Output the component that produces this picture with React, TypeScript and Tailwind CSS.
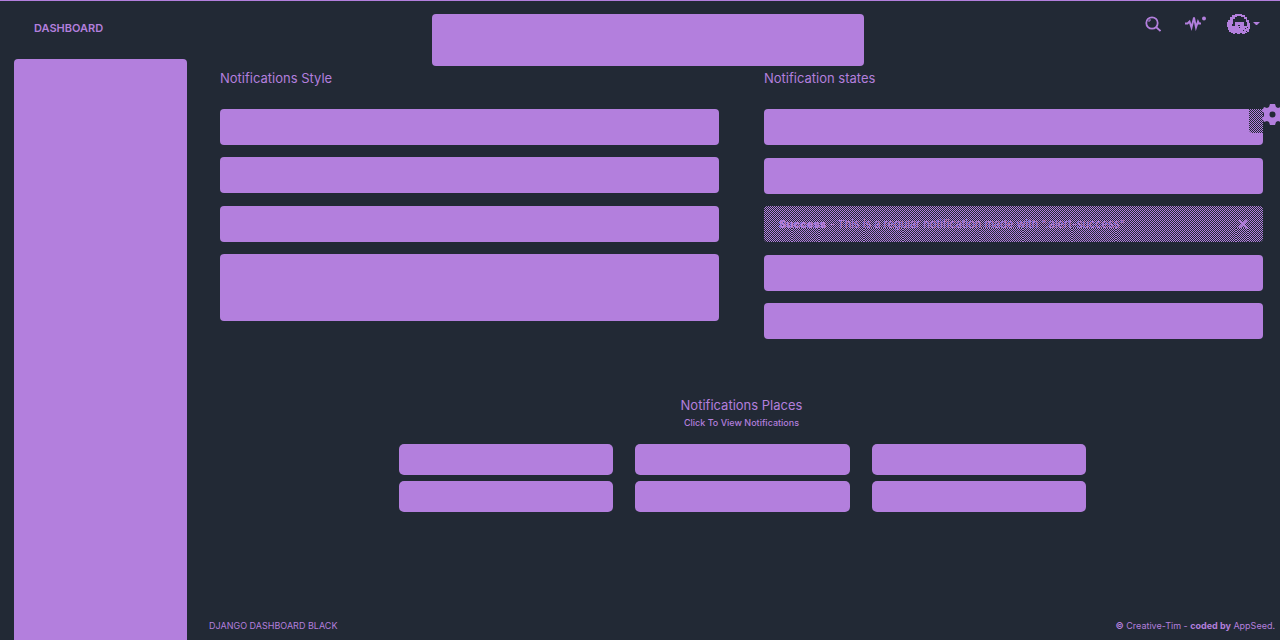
import React from "react";

const solid = "rounded bg-[#b37fdd]";
const checker =
  "bg-[conic-gradient(#b37fdd_25%,#222935_0_50%,#b37fdd_0_75%,#222935_0)] bg-[length:2px_2px]";
const checkerShifted =
  "bg-[conic-gradient(#222935_25%,#b37fdd_0_50%,#222935_0_75%,#b37fdd_0)] bg-[length:2px_2px]";

function Alert({ label, tall = false }: { label: string; tall?: boolean }) {
  return <div role="alert" aria-label={label} className={`${solid} ${tall ? "h-[67px]" : "h-9"}`} />;
}

const places = ["Top Left", "Top Center", "Top Right", "Bottom Left", "Bottom Center", "Bottom Right"];

const shades = [
  "left-7 w-[27px]",
  "left-[100px] w-[39px]",
  "left-[216px] w-[43px]",
  "left-[308px] w-11",
  "right-[15px] w-3",
];

export default function App() {
  return (
    <div className="relative flex min-h-screen flex-col overflow-hidden border-t border-[#b37fdd] bg-[#222935] font-['Inter',sans-serif] text-[#b37fdd]">
      <header className="flex h-[58px] items-start justify-between pr-5 pl-[34px]">
        <a href="#dashboard" className="pt-[19px] text-[11px] leading-4 font-semibold">
          DASHBOARD
        </a>
        <nav className="flex items-start pt-3">
          <button type="button" aria-label="Search" className="mt-[3px] mr-6">
            <svg width="16" height="16" viewBox="0 0 16 16" fill="none" stroke="currentColor">
              <circle cx="7" cy="7" r="5.7" strokeWidth="1.8" />
              <path d="M11 11l4.500 4" strokeWidth="1.7" />
              <path d="M4 6V4h2" />
            </svg>
          </button>
          <button type="button" aria-label="Activity" className="mt-0.5 mr-5">
            <svg width="22" height="16" viewBox="0 0 22 16" fill="none" stroke="currentColor">
              <path d="M0 8.500h2.500l2-2 2 6 2.500-10 2 10 2-6 1 2h2" strokeWidth="1.9" />
              <circle cx="19" cy="3.500" r="2" fill="currentColor" stroke="none" />
            </svg>
          </button>
          <button type="button" aria-label="Account" className="flex items-center gap-0.5">
            <svg width="24" height="22" viewBox="0 0 24 22">
              <path
                fill="currentColor"
                fillRule="evenodd"
                d="M8 1h7v1h3v2h2v3h2v3h1v6h-1v3h-2v1h-2v1h-3v-1h-2v1h-3v-1h-2v1H6v-1H4v-1H2v-2H1v-3H0v-5h1V7h2V4h2V2h3zM10 3v1H8v2H6v5H5v2h3V9h9v4h3V9h-1V6h-2V4h-3V3zM11 12h2v1h-2zM12 14h1v1h-1zM18 15h1v1h-1zM16 17h1v1h-1zM20 14h1v1h-1zM19 18h1v1h-1z"
              />
            </svg>
            <svg width="7" height="4" viewBox="0 0 7 4" fill="currentColor">
              <path d="M0 0h7L4 3H3z" />
            </svg>
          </button>
        </nav>
      </header>
      <div className={`${solid} absolute top-[13px] left-[432px] h-[52px] w-[432px]`} role="status" aria-label="Notification" />

      <div className="flex flex-1 pl-[14px]">
        <aside aria-label="Sidebar" className="w-[173px] shrink-0 rounded-t bg-[#b37fdd]" />
        <div className="flex min-w-0 flex-1 flex-col">
          <main className="flex-1 pr-[17px] pl-[33px]">
            <div className="grid grid-cols-2 items-start gap-[45px] pt-2.5">
              <section>
                <h2 className="mb-[22px] text-[13px] leading-[18px]">Notifications Style</h2>
                <div className="flex h-[212px] flex-col justify-between">
                  <Alert label="Plain notification" />
                  <Alert label="Notification with close button" />
                  <Alert label="Notification with icon" />
                  <Alert label="Notification with long text" tall />
                </div>
              </section>
              <section>
                <h2 className="mb-[22px] text-[13px] leading-[18px]">Notification states</h2>
                <div className="flex h-[230px] flex-col justify-between">
                  <div className="relative">
                    <Alert label="Primary" />
                    <div className={`${checker} absolute top-0 right-0 h-6 w-[14px] rounded-bl`} />
                  </div>
                  <Alert label="Info" />
                  <div role="alert" className={`${checkerShifted} relative flex h-9 items-center justify-between rounded px-[15px]`}>
                    {shades.map((s) => (
                      <span key={s} className={`${checker} absolute bottom-0 h-[14px] ${s}`} />
                    ))}
                    <p className="relative text-[11px] leading-4 whitespace-nowrap">
                      <b className="font-black">Success</b> - This is a regular notification made with ".alert-success"
                    </p>
                    <button type="button" aria-label="Close" className="relative">
                      <svg width="10" height="10" viewBox="0 0 10 10" stroke="currentColor" strokeWidth="2">
                        <path d="M1 1l8 8M9 1l-8 8" />
                      </svg>
                    </button>
                  </div>
                  <Alert label="Warning" />
                  <Alert label="Danger" />
                </div>
              </section>
            </div>
            <section className="pt-[57px] text-center">
              <h2 className="text-[13px] leading-[18px]">Notifications Places</h2>
              <p className="text-[9px] leading-[18px] font-medium">Click To View Notifications</p>
              <div className="mx-auto mt-3 grid w-[66%] grid-cols-3 gap-x-[22px] gap-y-1.5 pl-0.5">
                {places.map((p) => (
                  <button key={p} type="button" aria-label={p} className="h-[31px] rounded-[5px] bg-[#b37fdd]" />
                ))}
              </div>
            </section>
          </main>
          <footer className="flex justify-between pr-[5px] pb-1.5 pl-[22px] text-[9px] leading-4">
            <a href="#django">DJANGO DASHBOARD BLACK</a>
            <p>
              <b>©</b> <a href="#creative">Creative-Tim</a> - <b>coded by</b> <a href="#appseed">AppSeed.</a>
            </p>
          </footer>
        </div>
      </div>

      <button type="button" aria-label="Settings" className="absolute top-[103px] right-[-3px]">
        <svg width="21" height="21" viewBox="0 0 21 21">
          <path
            fill="currentColor"
            fillRule="evenodd"
            d="M8 0h5l1 3 2 1 3-1 2 4-2 2v3l2 2-2 4-3-1-2 1-1 3H8l-1-3-2-1-3 1-2-4 2-2V9L0 7l2-4 3 1 2-1zM10.5 7.5a3 3 0 1 0 0 6 3 3 0 0 0 0-6z"
          />
        </svg>
      </button>
    </div>
  );
}
